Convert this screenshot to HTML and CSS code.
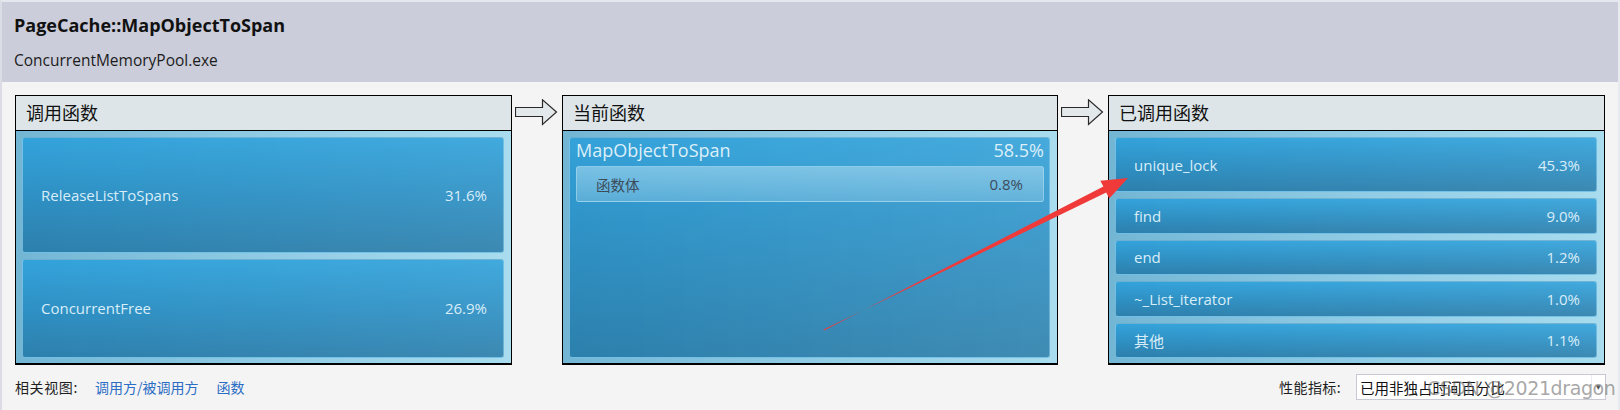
FILE: index.html
```html
<!DOCTYPE html>
<html lang="zh-CN">
<head>
<meta charset="utf-8">
<title>PageCache::MapObjectToSpan</title>
<link rel="stylesheet" href="styles.css">
</head>
<body>
<div class="page">
  <header class="top">
    <h1 class="fn-title">PageCache::MapObjectToSpan</h1>
    <div class="fn-module">ConcurrentMemoryPool.exe</div>
  </header>

  <main class="flow">
    <section class="panel">
      <div class="panel-head">调用函数</div>
      <div class="panel-body">
        <div class="item" style="flex-grow:31.6"><span class="name">ReleaseListToSpans</span><span class="pct">31.6%</span></div>
        <div class="item" style="flex-grow:26.9"><span class="name">ConcurrentFree</span><span class="pct">26.9%</span></div>
      </div>
    </section>

    <div class="arrow-col">
      <svg class="flow-arrow" width="43" height="27" viewBox="0 0 43 27"><path d="M0.5 8.5 H27.5 V0.8 L41.5 13 L27.5 25.5 V17.5 H0.5 Z" fill="#e3e8ea" stroke="#2a2a2a" stroke-width="1.2" stroke-linejoin="miter"/></svg>
    </div>

    <section class="panel">
      <div class="panel-head">当前函数</div>
      <div class="panel-body">
        <div class="item current">
          <div class="current-row"><span class="cur-name">MapObjectToSpan</span><span class="cur-pct">58.5%</span></div>
          <div class="sub-item"><span>函数体</span><span>0.8%</span></div>
        </div>
      </div>
    </section>

    <div class="arrow-col">
      <svg class="flow-arrow" width="43" height="27" viewBox="0 0 43 27"><path d="M0.5 8.5 H27.5 V0.8 L41.5 13 L27.5 25.5 V17.5 H0.5 Z" fill="#e3e8ea" stroke="#2a2a2a" stroke-width="1.2" stroke-linejoin="miter"/></svg>
    </div>

    <section class="panel">
      <div class="panel-head">已调用函数</div>
      <div class="panel-body callee">
        <div class="item big"><span class="name">unique_lock</span><span class="pct">45.3%</span></div>
        <div class="item small"><span class="name">find</span><span class="pct">9.0%</span></div>
        <div class="item small"><span class="name">end</span><span class="pct">1.2%</span></div>
        <div class="item small"><span class="name">~_List_iterator</span><span class="pct">1.0%</span></div>
        <div class="item small"><span class="name">其他</span><span class="pct">1.1%</span></div>
      </div>
    </section>
  </main>

  <footer class="bottom">
    <div class="related">
      <span class="label">相关视图:</span>
      <a class="link" href="#">调用方/被调用方</a>
      <a class="link" href="#">函数</a>
    </div>
    <div class="metric">
      <span class="label">性能指标:</span>
      <div class="select">
        <span class="select-text">已用非独占时间百分比</span>
        <span class="select-btn">▾</span>
      </div>
    </div>
  </footer>

  <div class="watermark">CSDN @2021dragon</div>

  <svg class="annot" width="1620" height="410" viewBox="0 0 1620 410">
    <polygon points="824,330.4 1103.4,186.6 1100.3,180.7 1128,178 1109.3,198.5 1106.2,192.4 823.6,329.6" fill="#f03a3a"/>
  </svg>
</div>
</body>
</html>
```

FILE: styles.css
```css
* { box-sizing: border-box; }

html, body {
  margin: 0;
  padding: 0;
  width: 1620px;
  height: 410px;
  overflow: hidden;
  background: #f4f4f4;
}

.page {
  position: relative;
  width: 1620px;
  height: 410px;
  border-left: 2px solid #dcdce6;
  border-top: 2px solid #e6e6ee;
  border-right: 2px solid #e9e9f0;
  font-family: "Open Sans", "Noto Sans", "Noto Sans CJK SC", sans-serif;
}

.top {
  height: 80px;
  background: #cbcdda;
  padding: 10px 0 0 12px;
}

.fn-title {
  margin: 0;
  font-size: 18px;
  font-weight: 700;
  color: #111;
  line-height: 26px;
}

.fn-module {
  margin-top: 11px;
  font-size: 15.5px;
  color: #1c1c1c;
  line-height: 22px;
}

.flow {
  display: grid;
  grid-template-columns: 497px 50px 496px 50px 497px;
  padding: 13px 0 0 13px;
  height: 283px;
}

.panel {
  height: 270px;
  border: 1px solid #000;
  border-bottom-width: 2px;
  display: flex;
  flex-direction: column;
}

.panel-head {
  height: 35px;
  flex: none;
  background: #dde5e8;
  border-bottom: 1px solid #000;
  padding-left: 10px;
  font-family: "Noto Sans CJK SC", sans-serif;
  font-size: 18px;
  line-height: 32px;
  color: #111;
}

.panel-body {
  flex: 1;
  display: flex;
  flex-direction: column;
  gap: 6px;
  padding: 6px 7px 5px 6px;
  background: linear-gradient(to right, #73b6d4 0%, #92cde6 55%, #a8dcee 100%);
}

.item {
  display: flex;
  align-items: center;
  justify-content: space-between;
  padding: 0 16px 0 18px;
  border: 1px solid rgba(160, 215, 240, 0.55);
  border-radius: 3px;
  background:
    linear-gradient(to right, rgba(255,255,255,0) 0%, rgba(255,255,255,0.07) 100%),
    linear-gradient(to bottom, #33a3db 0%, #2e8fc2 55%, #2d80ac 100%);
  color: #d8edf8;
  font-size: 15px;
  flex-basis: 0;
  min-height: 0;
}

.item .name, .item .pct {
  font-family: "Open Sans", "Noto Sans CJK SC", sans-serif;
}

.callee .big { flex: 0 0 55px; }
.callee .small { flex: 1 1 0; }

.item.current {
  flex: 1;
  flex-direction: column;
  align-items: stretch;
  justify-content: flex-start;
  padding: 0 5px 0 6px;
  background:
    linear-gradient(to right, rgba(255,255,255,0) 0%, rgba(255,255,255,0.09) 100%),
    linear-gradient(to bottom, #34a2d9 0%, #2f93c7 40%, #2c80ac 100%);
}

.current-row {
  display: flex;
  justify-content: space-between;
  align-items: center;
  height: 22px;
  margin-top: 1px;
  font-size: 18px;
  color: #dceff9;
}

.sub-item {
  margin-top: 5px;
  height: 36px;
  display: flex;
  align-items: center;
  justify-content: space-between;
  padding: 0 20px 0 19px;
  border: 1px solid rgba(170, 220, 242, 0.6);
  border-radius: 3px;
  background: linear-gradient(to bottom, rgba(170, 218, 240, 0.6) 0%, rgba(140, 200, 230, 0.45) 100%);
  color: #3c4c5a;
  font-size: 14.5px;
  font-family: "Noto Sans CJK SC", "Open Sans", sans-serif;
}

.sub-item span:last-child {
  font-family: "Open Sans", sans-serif;
  font-size: 15px;
}

.arrow-col {
  padding: 4px 0 0 3px;
}

.flow-arrow { display: block; }

.bottom {
  display: flex;
  justify-content: space-between;
  align-items: center;
  height: 26px;
  padding: 0 12px 0 13px;
  margin-top: 9px;
  font-family: "Noto Sans CJK SC", sans-serif;
  font-size: 14px;
}

.related { display: flex; align-items: center; }

.label { color: #1e1e1e; }

.related .label { letter-spacing: 0.6px; }

.link {
  color: #2b6cc4;
  text-decoration: none;
  margin-left: 17px;
}
.related .link:last-child { margin-left: 18px; }

.metric { display: flex; align-items: center; }

.metric .label { letter-spacing: 0.4px; }

.select {
  margin-left: 15px;
  width: 250px;
  height: 26px;
  border: 1px solid #c9c9d6;
  background: #fff;
  display: flex;
  align-items: center;
  justify-content: space-between;
  padding-left: 3px;
}

.select-text {
  font-size: 14.5px;
  color: #111;
}

.select-btn {
  width: 14px;
  height: 24px;
  border-left: 1px solid #ececf2;
  font-size: 9px;
  line-height: 24px;
  text-align: center;
  color: #555;
}

.watermark {
  position: absolute;
  left: 1425px;
  top: 373px;
  white-space: nowrap;
  font-family: "DejaVu Sans", sans-serif;
  font-size: 19px;
  line-height: 26px;
  color: rgba(110, 110, 110, 0.62);
  pointer-events: none;
  letter-spacing: -0.4px;
}

.annot {
  position: absolute;
  left: -2px;
  top: -2px;
  pointer-events: none;
}
```
